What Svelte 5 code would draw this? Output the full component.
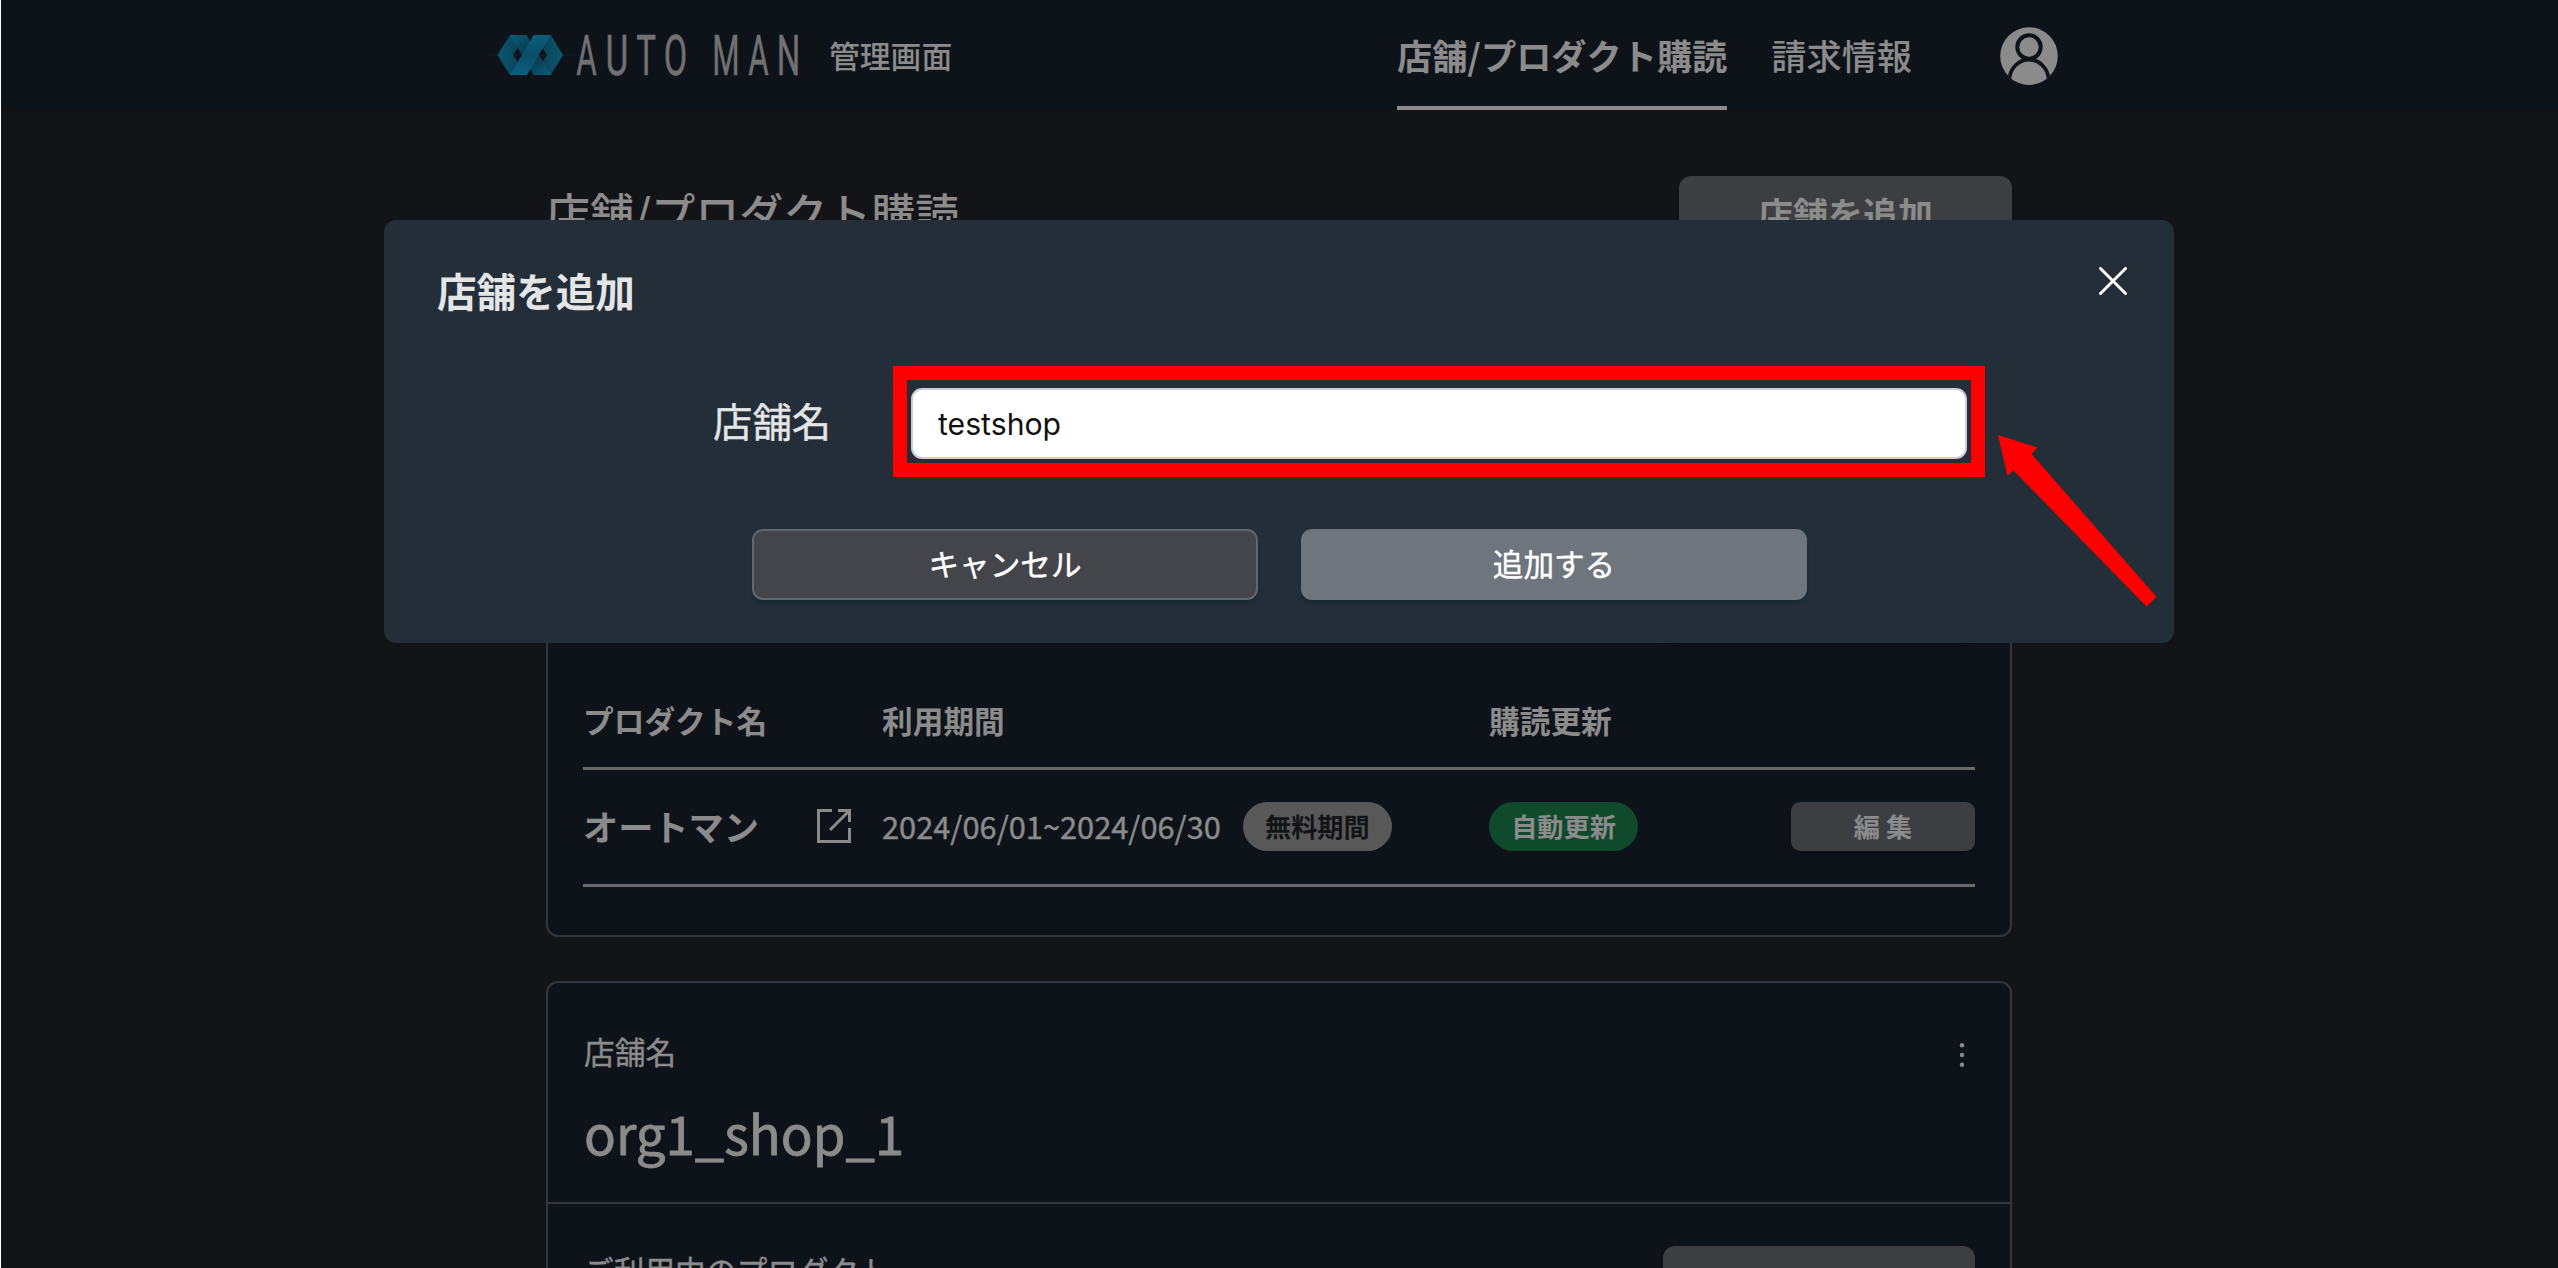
<script>
  const navItems = [
    { label: "店舗/プロダクト購読", active: true },
    { label: "請求情報", active: false },
  ];

  const shops = [
    {
      name: "",
      products: [
        {
          name: "オートマン",
          period: "2024/06/01~2024/06/30",
          plan: "無料期間",
          renewal: "自動更新",
        },
      ],
    },
    { name: "org1_shop_1", products: [] },
  ];

  // centre of each letter of the wordmark and how far it is condensed
  const wordmark = [
    { ch: "A", x: 10.5, squeeze: 0.57 },
    { ch: "U", x: 41, squeeze: 0.64 },
    { ch: "T", x: 70, squeeze: 0.6 },
    { ch: "O", x: 99.5, squeeze: 0.62 },
    { ch: "M", x: 150, squeeze: 0.57 },
    { ch: "A", x: 182.5, squeeze: 0.57 },
    { ch: "N", x: 212.5, squeeze: 0.6 },
  ];

  let shopName = $state("testshop");
</script>

<div class="page">
  <header>
    <div class="brand">
      <svg class="mark" viewBox="0 0 82 40" aria-hidden="true">
        <defs>
          <linearGradient id="band" x1="0" y1="0" x2="0" y2="1">
            <stop offset="0" stop-color="#0a5f7e" />
            <stop offset="0.5" stop-color="#0a4e68" />
            <stop offset="1" stop-color="#0a5f82" />
          </linearGradient>
          <linearGradient id="backBand" x1="0" y1="0" x2="1" y2="1">
            <stop offset="0" stop-color="#0a5f7e" />
            <stop offset="0.35" stop-color="#0a3f54" />
            <stop offset="0.6" stop-color="#0b3a4d" />
            <stop offset="1" stop-color="#0a5f82" />
          </linearGradient>
          <linearGradient id="fold" x1="0" y1="0" x2="1" y2="0">
            <stop offset="0" stop-color="#0a5872" />
            <stop offset="1" stop-color="#0b3a4b" />
          </linearGradient>
          <linearGradient id="foldBack" x1="1" y1="0" x2="0" y2="0">
            <stop offset="0" stop-color="#0a5872" />
            <stop offset="1" stop-color="#0b3a4b" />
          </linearGradient>
        </defs>
        <path d="M0 20H82" stroke="#0c2430" stroke-width="1" />
        <path d="M6.500 20L19 0H36L22 20L36 40H19Z" fill="url(#fold)" />
        <path d="M72 20L59.700 0H43L56 20L43 40H59.700Z" fill="url(#foldBack)" />
        <path d="M19 0H36L60 40H42.500Z" fill="url(#backBand)" />
        <path d="M42.500 0H59.700L36 40H19Z" fill="url(#band)" />
        <path d="M36 0H42.500L39.200 6Z" fill="#0e131a" />
        <path d="M36.500 40H42L39.200 35Z" fill="#0e131a" />
      </svg>
      <svg class="wordmark" viewBox="0 0 226 42" role="img" aria-label="AUTO MAN">
        {#each wordmark as letter}
          <text transform="translate({letter.x} 40.500) scale({letter.squeeze} 1)" text-anchor="middle">
            {letter.ch}
          </text>
        {/each}
      </svg>
      <span class="brand-sub">管理画面</span>
    </div>
    <nav>
      {#each navItems as item}
        <a href="#top" class:active={item.active}>{item.label}</a>
      {/each}
    </nav>
    <svg class="avatar" viewBox="0 0 58 58" aria-hidden="true">
      <clipPath id="avatarClip"><circle cx="29" cy="29" r="28.8" /></clipPath>
      <g clip-path="url(#avatarClip)">
        <rect width="58" height="58" fill="#8b8b8b" />
        <path
          d="M9.500 62V51C10.500 41 19 32.500 29 32.500S47.500 41 48.500 51V62Z"
          fill="#8b8b8b"
          stroke="#0e131a"
          stroke-width="3.800"
        />
        <circle cx="29" cy="20" r="11.700" fill="#8b8b8b" stroke="#0e131a" stroke-width="4" />
      </g>
    </svg>
  </header>

  <main>
    <div class="title-row">
      <h1>店舗/プロダクト購読</h1>
      <button class="btn-dim add-shop">店舗を追加</button>
    </div>

    {#each shops as shop}
      <section class="card">
        <div class="card-head">
          {#if shop.name}
            <div>
              <div class="caption">店舗名</div>
              <div class="shop-name">{shop.name}</div>
            </div>
            <svg class="dots" viewBox="0 0 6 26" aria-hidden="true">
              <circle cx="3" cy="3.300" r="2.200" />
              <circle cx="3" cy="13" r="2.200" />
              <circle cx="3" cy="22.700" r="2.200" />
            </svg>
          {/if}
        </div>
        <div class="card-body">
          <div class="section-row">
            <div class="caption">ご利用中のプロダクト</div>
            <button class="btn-dim add-product" aria-label="add"></button>
          </div>
          {#if shop.products.length > 0}
            <div class="row head">
              <span>プロダクト名</span>
              <span>利用期間</span>
              <span>購読更新</span>
            </div>
          {/if}
          {#each shop.products as product}
            <div class="row">
              <div class="product">
                <b>{product.name}</b>
                <svg class="external" viewBox="0 0 34 34" aria-hidden="true">
                  <path d="M15 1.500H1.500V32.500H32.500V19" />
                  <path d="M21 1.500H32.500V13M32.500 1.500L13 21" />
                </svg>
              </div>
              <div class="period">
                {product.period}
                <span class="pill">{product.plan}</span>
              </div>
              <span class="pill green">{product.renewal}</span>
              <button class="btn-dim edit">編 集</button>
            </div>
          {/each}
        </div>
      </section>
    {/each}
  </main>

  <div class="modal" role="dialog" aria-label="店舗を追加">
    <div class="modal-head">
      <h2>店舗を追加</h2>
      <svg class="close" viewBox="0 0 28 28" aria-hidden="true">
        <path d="M1.500 1.500L26.500 26.500M26.500 1.500L1.500 26.500" />
      </svg>
    </div>
    <div class="field">
      <label for="shop-name">店舗名</label>
      <div class="highlight">
        <input id="shop-name" type="text" bind:value={shopName} />
      </div>
    </div>
    <div class="actions">
      <button class="cancel">キャンセル</button>
      <button class="submit">追加する</button>
    </div>
    <svg class="arrow" viewBox="0 0 160 172" aria-hidden="true">
      <path d="M0 0L39.500 12.500L33.500 19L158.500 162L148.500 171.500L15.500 35.500L9.500 41Z" />
    </svg>
  </div>
</div>

<style>
  :global(body) {
    overflow: hidden;
    background: #131417;
  }
  .page {
    position: relative;
    box-sizing: border-box;
    height: 1268px;
    overflow: hidden;
    border-left: 1px solid #fff;
    background: #131417;
    color: #8b8b8b;
    font-family: "Noto Sans CJK JP", sans-serif;
    font-size: 30.7px;
    line-height: 1.5;
  }
  button {
    box-sizing: border-box;
    padding: 0;
    border: none;
    font-family: inherit;
    line-height: 1;
  }

  header {
    display: flex;
    height: 110px;
    padding-left: 490px;
    background: #0e131a;
  }
  .brand {
    display: flex;
    align-items: center;
    width: 906px;
  }
  .mark {
    width: 82px;
    height: 40px;
  }
  .wordmark {
    width: 226px;
    height: 42px;
    margin-left: 3px;
    overflow: visible;
  }
  .wordmark text {
    font-family: Roboto, sans-serif;
    font-size: 55px;
    fill: #727171;
    stroke: #727171;
    stroke-width: 0.5px;
  }
  .brand-sub {
    margin-left: 27px;
    font-size: 30.8px;
    font-weight: 500;
  }
  nav {
    display: flex;
    gap: 44px;
  }
  nav a {
    box-sizing: border-box;
    height: 110px;
    border-bottom: 4px solid transparent;
    color: inherit;
    font-size: 35.2px;
    font-weight: 500;
    line-height: 109px;
    text-decoration: none;
    white-space: nowrap;
  }
  nav a.active {
    border-color: #8b8b8b;
    font-weight: 700;
  }
  .avatar {
    width: 58px;
    height: 58px;
    margin: 27px 0 0 87.500px;
  }

  main {
    width: 1466px;
    margin-left: 545px;
    padding-top: 66px;
  }
  .title-row {
    display: flex;
    align-items: center;
    justify-content: space-between;
    height: 72px;
    margin-bottom: 57.500px;
  }
  h1 {
    margin: 0;
    font-size: 44px;
    font-weight: 500;
    line-height: 1;
  }
  .btn-dim {
    background: #3c3e42;
    color: #8b8b8b;
    font-weight: 700;
    box-shadow: 0 3px 3px #0b1016;
  }
  .add-shop {
    width: 333px;
    height: 72px;
    border-radius: 12px;
    font-size: 35px;
  }

  .card {
    box-sizing: border-box;
    margin-bottom: 44px;
    border: 2px solid #33373b;
    border-radius: 12px;
    background: #0e131a;
  }
  .card-head {
    box-sizing: border-box;
    display: flex;
    justify-content: space-between;
    height: 221px;
    padding: 45px 45px 0 36px;
    border-bottom: 2px solid #36393d;
  }
  .caption {
    -webkit-text-stroke: 0.4px;
  }
  .shop-name {
    margin-top: 19px;
    font-size: 52.700px;
    line-height: 1.5;
    -webkit-text-stroke: 0.8px;
  }
  .dots {
    width: 6px;
    height: 26px;
    margin-top: 14px;
    fill: #8b8b8b;
  }
  .card-body {
    padding: 42px 35px 48px;
  }
  .section-row {
    display: flex;
    align-items: flex-start;
    justify-content: space-between;
    height: 72px;
  }
  .section-row .caption {
    padding-top: 1px;
  }
  .add-product {
    width: 312px;
    height: 72px;
    border-radius: 12px;
  }
  .row {
    box-sizing: border-box;
    display: grid;
    grid-template-columns: 299px 607px 1fr 184px;
    align-items: center;
    height: 117px;
    padding-bottom: 1px;
    border-bottom: 3px solid #69696a;
  }
  .row.head {
    height: 127px;
    padding-top: 32px;
    font-weight: 700;
  }
  .product {
    display: flex;
    align-items: center;
    justify-content: space-between;
    padding-right: 31px;
    font-size: 35.200px;
  }
  .external {
    width: 34px;
    height: 34px;
    fill: none;
    stroke: #8b8b8b;
    stroke-width: 3;
  }
  .period {
    display: flex;
    align-items: center;
    gap: 22px;
    font-size: 30.800px;
    -webkit-text-stroke: 0.4px;
  }
  .pill {
    box-sizing: border-box;
    width: 149px;
    border-radius: 25px;
    background: #585858;
    color: #131417;
    font-size: 26.200px;
    font-weight: 700;
    line-height: 49px;
    text-align: center;
    -webkit-text-stroke: 0;
  }
  .pill.green {
    background: #0f4a2c;
    color: #8b8b8b;
  }
  .edit {
    height: 49px;
    border-radius: 9px;
    font-size: 26.200px;
  }

  .modal {
    position: absolute;
    top: 220px;
    left: 383px;
    box-sizing: border-box;
    width: 1790px;
    height: 423px;
    padding: 47px 47px 0 53px;
    border-radius: 12px;
    background: #232e39;
    color: #e4e5e6;
  }
  .modal-head {
    display: flex;
    justify-content: space-between;
    height: 99px;
  }
  h2 {
    margin: 0;
    font-size: 39.600px;
    font-weight: 700;
    line-height: 46px;
  }
  .close {
    width: 28px;
    height: 28px;
    fill: none;
    stroke: #fff;
    stroke-width: 3;
    stroke-linecap: round;
  }
  .field {
    display: flex;
    align-items: center;
    margin-left: 276px;
  }
  label {
    width: 180px;
    padding-bottom: 4px;
    font-size: 39.400px;
    line-height: 1;
    -webkit-text-stroke: 0.4px;
  }
  .highlight {
    box-sizing: border-box;
    width: 1092px;
    height: 111px;
    padding: 8px 4px;
    border: 14px solid #f00;
  }
  input {
    box-sizing: border-box;
    width: 100%;
    height: 71px;
    padding: 1px 25px 0;
    border: 2px solid #c9ced4;
    border-radius: 11px;
    background: #fff;
    color: #111;
    font-family: Inter, sans-serif;
    font-size: 30.200px;
  }
  .actions {
    display: flex;
    gap: 43px;
    margin: 52px 0 0 315px;
  }
  .actions button {
    width: 506px;
    height: 71px;
    padding-bottom: 2px;
    border: 2px solid #61676d;
    border-radius: 11px;
    background: #43454a;
    color: #fff;
    font-size: 30.600px;
    box-shadow: 0 4px 3px #1a2a35;
    -webkit-text-stroke: 0.4px;
  }
  .actions .submit {
    border-color: #6e757c;
    background: #6e757c;
  }
  .arrow {
    position: absolute;
    top: 215px;
    left: 1614px;
    width: 160px;
    height: 172px;
    fill: #f00;
  }
</style>
